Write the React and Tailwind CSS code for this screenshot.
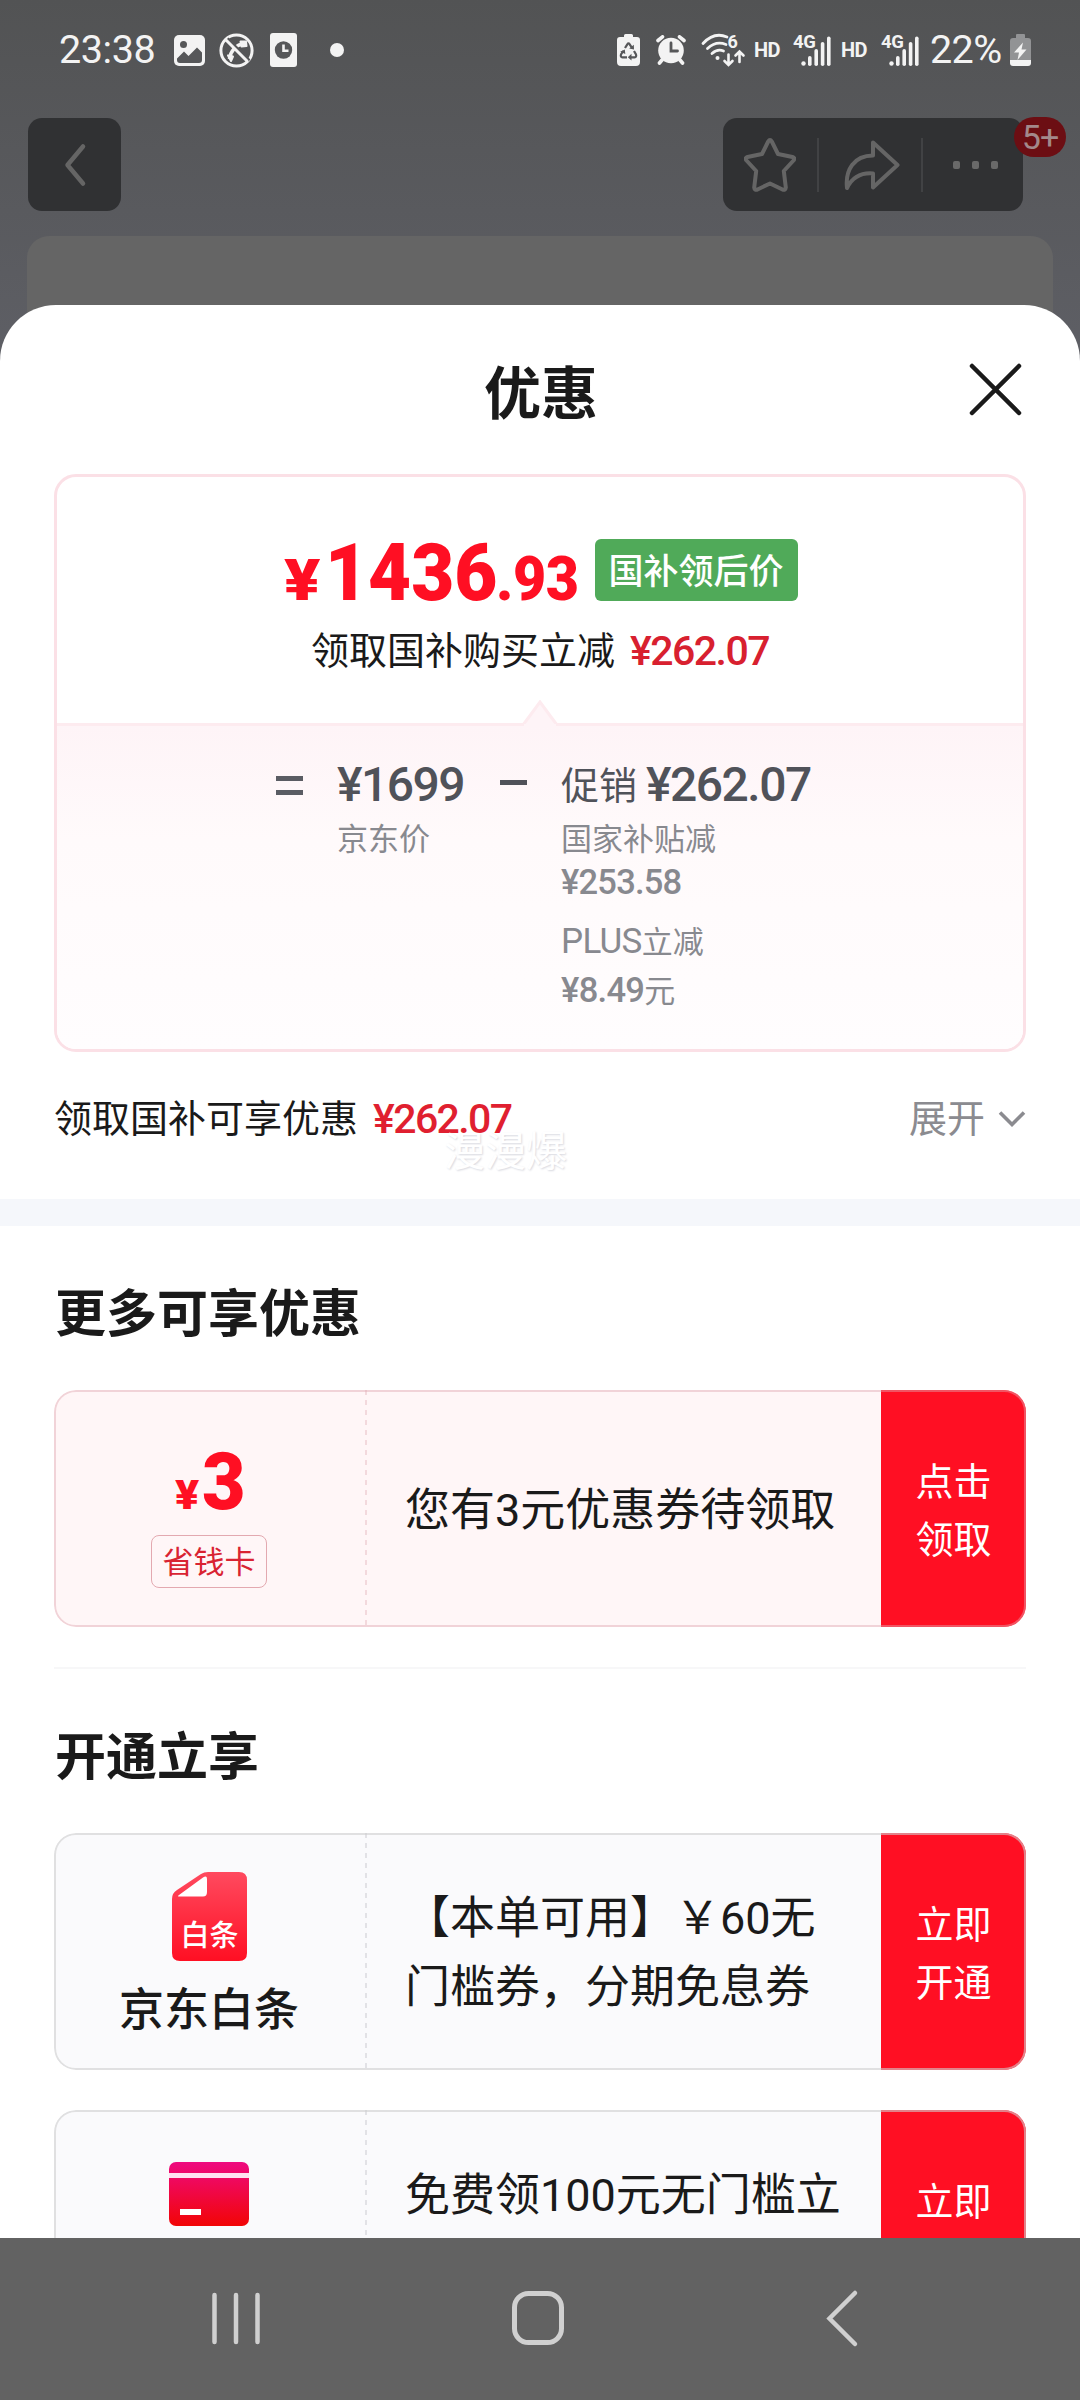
import React from 'react';

const ImageIcon = () => (
    <svg className="w-[31px] h-[31px]" viewBox="0 0 31 31">
        <rect width="31" height="31" rx="5" fill="#f3f3f3" />
        <circle cx="9.5" cy="9.5" r="3.5" fill="#565759" />
        <path d="M3 23.5 L10 16.5 L14.5 21 L23 12.5 L28 17.5 V25 Q28 28 25 28 H6 Q3 28 3 25 Z" fill="#565759" />
    </svg>
);

const NoCallIcon = () => (
    <svg className="w-[35px] h-[35px]" viewBox="0 0 35 35" fill="none" stroke="#f3f3f3">
        <circle cx="17.5" cy="17.5" r="15.6" strokeWidth="3" />
        <path d="M10.5 26 C11.5 18 17 11.5 25.5 10.5" strokeWidth="3.6" />
        <path d="M9 22.5 L14 23.5 L12 28 Z M21.5 8.5 L27 8.5 L27.5 13 L22.5 13.5 Z" fill="#f3f3f3" strokeWidth="2" strokeLinejoin="round" />
        <path d="M8.5 5.5 L30.5 27.5" stroke="#565759" strokeWidth="2.5" />
        <path d="M6.5 6.5 L28.5 28.5" strokeWidth="3" />
    </svg>
);

const ClockDocIcon = () => (
    <svg className="w-[27px] h-[34px]" viewBox="0 0 27 34">
        <rect width="27" height="34" rx="3" fill="#f3f3f3" />
        <circle cx="13.5" cy="17" r="8.7" fill="#565759" />
        <path d="M13.5 11.5 V17.8 H18.5" fill="none" stroke="#f3f3f3" strokeWidth="2.6" />
    </svg>
);

const RecycleBatteryIcon = () => (
    <svg className="w-[23px] h-[32px]" viewBox="0 0 23 32">
        <path d="M7 3 V1.5 Q7 0 8.5 0 H14.5 Q16 0 16 1.5 V3 H20 Q23 3 23 6 V28 Q23 32 19 32 H4 Q0 32 0 28 V6 Q0 3 3 3 Z" fill="#f3f3f3" />
        <g fill="none" stroke="#565759" strokeWidth="2.2">
            <path d="M8 14 L10.3 10.3 Q11.5 8.6 12.7 10.3 L15 14" />
            <path d="M17 17 L19 20.5 Q19.8 23 17.5 23.3 H13" />
            <path d="M10 23.3 H5.5 Q3.2 23 4 20.5 L6.2 17" />
        </g>
        <path d="M12.2 14.5 L17 15.5 L16.8 10.8 Z M14.5 19.8 L10.8 23.3 L14.5 26.5 Z M3.2 17.8 L7.8 15.4 L8.3 20 Z" fill="#565759" />
    </svg>
);

const AlarmIcon = () => (
    <svg className="w-[30px] h-[30px]" viewBox="0 0 30 30">
        <circle cx="15" cy="15.5" r="12.8" fill="#f3f3f3" />
        <path d="M2 5.5 L6.5 1.8 M28 5.5 L23.5 1.8 M6 25 L3.5 28 M24 25 L26.5 28" stroke="#f3f3f3" strokeWidth="3.6" strokeLinecap="round" />
        <path d="M15 8 V16 H21.5" fill="none" stroke="#565759" strokeWidth="2.8" strokeLinecap="round" />
    </svg>
);

const WifiIcon = () => (
    <svg className="w-[44px] h-[34px] overflow-visible" viewBox="0 0 44 34" fill="none" stroke="#f3f3f3" strokeWidth="2.8" strokeLinecap="round">
        <path d="M2 10.5 Q13 -1.5 26 4" />
        <path d="M6.5 15.5 Q15 7.5 25 11.5" />
        <path d="M11 20.5 Q16.5 15.5 22.5 18" />
        <circle cx="16.5" cy="25" r="2" fill="#f3f3f3" stroke="none" />
        <path d="M27.5 21.5 V31.5 M23.5 28 L27.5 32 L31.5 28" strokeWidth="2.6" />
        <path d="M38.5 29 V18.5 M34.5 22.5 L38.5 18.5 L42.5 22.5" strokeWidth="2.6" />
        <text x="26.5" y="14.5" fontFamily="Roboto" fontWeight="700" fontSize="18" fill="#f3f3f3" stroke="none">6</text>
    </svg>
);

const SignalIcon = () => (
    <svg className="w-[38px] h-[34px] overflow-visible" viewBox="0 0 38 34">
        <text x="0" y="14.5" fontFamily="Roboto" fontWeight="700" fontSize="18.5" letterSpacing="-0.3" fill="#f3f3f3">4G</text>
        <g fill="#f3f3f3">
            <circle cx="10.5" cy="30.5" r="2.2" />
            <rect x="15" y="23" width="3.6" height="10" rx="1.8" />
            <rect x="21.4" y="16" width="3.6" height="17" rx="1.8" />
            <rect x="27.8" y="9" width="3.6" height="24" rx="1.8" />
            <rect x="34" y="3.5" width="3.6" height="29.5" rx="1.8" />
        </g>
    </svg>
);

const BatteryIcon = () => (
    <svg className="w-[21px] h-[32px]" viewBox="0 0 21 32">
        <path d="M6 4 V1 Q6 0 7 0 H14 Q15 0 15 1 V4 H18 Q21 4 21 7 V26 H0 V7 Q0 4 3 4 Z" fill="#929395" />
        <path d="M0 26 H21 V29 Q21 32 18 32 H3 Q0 32 0 29 Z" fill="#f3f3f3" />
        <path d="M13 8.5 L4 18.5 H9 L7.5 26 L16.5 15.5 H11.5 Z" fill="#f3f3f3" />
    </svg>
);

const StatusBar = () => (
    <div className="h-[100px] flex items-center pl-[59px] pr-[49px] text-[#f3f3f3]">
        <span className="w-[115px] text-[39.5px] leading-[40px] tracking-[-0.4px]">23:38</span>
        <ImageIcon />
        <div className="ml-[14px]"><NoCallIcon /></div>
        <div className="ml-[16px]"><ClockDocIcon /></div>
        <div className="ml-[33px] w-[14px] h-[14px] rounded-full bg-[#f3f3f3]" />
        <div className="ml-auto flex items-center">
            <RecycleBatteryIcon />
            <div className="ml-[16px]"><AlarmIcon /></div>
            <div className="ml-[15px]"><WifiIcon /></div>
            <span className="ml-[9px] w-[39px] text-[20px] leading-[20px] font-bold tracking-[-0.5px]">HD</span>
            <SignalIcon />
            <span className="ml-[10px] w-[40px] text-[20px] leading-[20px] font-bold tracking-[-0.5px]">HD</span>
            <SignalIcon />
            <span className="ml-[11px] w-[80px] text-[39.5px] leading-[40px] tracking-[-0.6px]">22%</span>
            <BatteryIcon />
        </div>
    </div>
);

const TopBar = () => (
    <div className="h-[93px] mt-[18px] pl-[28px] pr-[57px] flex justify-between">
        <div className="w-[93px] rounded-[14px] bg-[#303133] flex items-center justify-center">
            <svg className="w-[24px] h-[44px]" viewBox="0 0 24 44" fill="none" stroke="#656565" strokeWidth="4.5" strokeLinecap="round" strokeLinejoin="round">
                <path d="M20 3.5 L4.5 22 L20 40.5" />
            </svg>
        </div>
        <div className="relative w-[300px] rounded-[14px] bg-[#303133] flex items-center">
            <div className="w-[94px] flex justify-center pr-[1px]">
                <svg className="w-[52px] h-[54px]" viewBox="0 0 52 54" fill="none" stroke="#656565" strokeWidth="4" strokeLinejoin="round">
                    <path d="M24.2 3.5 Q26 0.5 27.8 3.5 L34 16 L48.5 19 Q51.5 20 49.5 22.5 L39.8 33 L41.8 49.5 Q41.5 52.5 38.5 51.5 L26 45.5 L13.5 51.5 Q10.5 52.5 10.2 49.5 L12.2 33 L2.5 22.5 Q0.5 20 3.5 19 L18 16 Z" />
                </svg>
            </div>
            <div className="w-[2px] h-[54px] bg-[#414244]" />
            <div className="w-[102px] flex justify-center pl-[4px]">
                <svg className="w-[56px] h-[50px]" viewBox="0 0 56 50" fill="none" stroke="#656565" strokeWidth="4" strokeLinejoin="round">
                    <path d="M29 2.5 L53.5 25 L29 47.5 V33.5 C17 32.5 8.5 37 3 48 C1 30 10 15.5 29 15.5 Z" />
                </svg>
            </div>
            <div className="w-[2px] h-[54px] bg-[#414244]" />
            <div className="ml-[30px] flex gap-[12px]">
                <div className="w-[7px] h-[8px] rounded-[2px] bg-[#696969]" />
                <div className="w-[7px] h-[8px] rounded-[2px] bg-[#696969]" />
                <div className="w-[7px] h-[8px] rounded-[2px] bg-[#696969]" />
            </div>
            <div className="absolute -top-[1px] left-[291px] w-[52px] h-[40px] rounded-full bg-[#6c0e13] text-[#a3898b] text-[34px] leading-[40px] text-center tracking-[-1px]">5+</div>
        </div>
    </div>
);

const PriceCard = () => (
    <div className="shrink-0 mx-[54px] h-[578px] border-[3px] border-[#fbe0e6] rounded-[22px] overflow-hidden">
        <div className="h-[246px] pt-[62px]">
            <div className="flex h-[62px] justify-center items-start">
                <div className="flex items-baseline w-[312px] pl-[1px] text-[#ff0f23] font-black leading-[69px]">
                    <span className="w-[41px] text-[58px] origin-left scale-x-[1.16]">¥</span>
                    <span className="w-[171px] text-[80px] origin-left scale-x-[0.93]">1436</span>
                    <span className="text-[61px] origin-left scale-x-[0.94] tracking-[-0.5px]">.93</span>
                </div>
                <div className="w-[203px] h-[62px] rounded-[6px] bg-[#50aa59] text-white text-[35px] leading-[67px] font-medium text-center">国补领后价</div>
            </div>
            <div className="mt-[27px] flex justify-center items-center text-[38px] leading-[46px] text-[#1a1a1a]">
                领取国补购买立减
                <span className="ml-[15px] text-[41px] font-medium tracking-[-1.5px] text-[#d8202f]">¥262.07</span>
            </div>
        </div>
        <div className="relative h-[326px] border-t-[3px] border-[#fdebef] bg-linear-to-b from-[#fef4f7] via-[#fffafb] via-35% to-[#fffdfe] pl-[219px] pt-[31px] flex items-start text-[#505259]">
            <svg className="absolute -top-[26px] left-[465px] w-[36px] h-[28px]" viewBox="0 0 36 28">
                <path d="M1 25 L18 2 L35 25" fill="#fef4f7" stroke="#fdebef" strokeWidth="3" />
                <rect x="2" y="24" width="32" height="4" fill="#fef4f7" />
            </svg>
            <div className="w-[27px] mt-[19px] flex flex-col gap-[9px]">
                <div className="h-[5px] bg-[#5a5c63]" />
                <div className="h-[5px] bg-[#5a5c63]" />
            </div>
            <div className="ml-[34px] w-[163px]">
                <div className="text-[48px] leading-[56px] font-medium tracking-[-1.5px]">¥1699</div>
                <div className="text-[31px] leading-[50px] text-[#88898f] mt-[2px]">京东价</div>
            </div>
            <div className="mt-[23px] w-[27px] h-[5px] bg-[#505259]" />
            <div className="ml-[34px]">
                <div className="flex items-center h-[56px] text-[38px]">
                    <span className="pt-[3px]">促销</span>
                    <span className="ml-[9px] text-[48px] font-medium tracking-[-1.5px]">¥262.07</span>
                </div>
                <div className="text-[31px] leading-[44px] text-[#88898f] mt-[5px]">国家补贴减</div>
                <div className="text-[34.5px] leading-[40px] text-[#88898f] font-medium tracking-[-0.8px]">¥253.58</div>
                <div className="text-[31px] leading-[46px] text-[#88898f] mt-[17px]"><span className="text-[35px] tracking-[-0.7px]">PLUS</span>立减</div>
                <div className="text-[31px] leading-[46px] text-[#88898f] mt-[1px]"><span className="text-[34.5px] font-medium tracking-[-0.7px]">¥8.49</span>元</div>
            </div>
        </div>
    </div>
);

const SummaryRow = () => (
    <div className="relative shrink-0 h-[147px] pt-[44px] px-[54px]">
        <div className="flex items-center text-[38px] leading-[46px] text-[#1a1a1a]">
            领取国补可享优惠
            <span className="ml-[15px] text-[41px] font-medium tracking-[-1.6px] text-[#e01f30]">¥262.07</span>
            <span className="ml-auto text-[#8b8b90]">展开</span>
            <svg className="ml-[13px] w-[28px] h-[18px]" viewBox="0 0 28 18" fill="none" stroke="#8b8b90" strokeWidth="3.6">
                <path d="M2 2.5 L14 14.5 L26 2.5" />
            </svg>
        </div>
        <div className="absolute left-[444px] top-[76px] text-[41px] leading-[48px] text-white [text-shadow:1px_1px_2px_#d8d9e0]">漫漫爆</div>
    </div>
);

const Coupon = ({ pink, left, lines, action }) => (
    <div className={`relative mx-[54px] h-[237px] rounded-[22px] overflow-hidden flex shrink-0 ${pink ? 'bg-[#fff6f7]' : 'bg-[#fafafc]'}`}>
        <div className="w-[311px] pr-[1px] flex flex-col items-center">
            {left}
        </div>
        <div className={`w-[2px] ${pink ? 'bg-[repeating-linear-gradient(#f3d9dd_0_5px,transparent_5px_10px)]' : 'bg-[repeating-linear-gradient(#e2e2e6_0_5px,transparent_5px_10px)]'}`} />
        <div className="flex-1 pt-[3px] pl-[38px] flex flex-col justify-center text-[45px] leading-[69px] text-[#1a1a1a] whitespace-nowrap">
            {lines.map((line) => <div key={line}>{line}</div>)}
        </div>
        <div className="w-[145px] pt-[5px] bg-[#ff0f23] text-white text-[38px] leading-[58px] flex flex-col items-center justify-center">
            {action.map((word) => <div key={word}>{word}</div>)}
        </div>
        <div className={`absolute inset-0 rounded-[22px] border-[2px] ${pink ? 'border-[#dfa9b1]/45' : 'border-[#cfcfcf]/60'}`} />
    </div>
);

const SavingCard = () => (
    <>
        <div className="mt-[57px] h-[70px] flex items-baseline leading-[70px] font-black text-[#ff0f23]">
            <span className="w-[27px] text-[40px] origin-left scale-x-[1.12]">¥</span>
            <span className="w-[42px] text-[80px] origin-left scale-x-[0.94]">3</span>
        </div>
        <div className="mt-[18px] w-[116px] h-[53px] border-[1px] border-[#e3a9b0] rounded-[8px] text-[31px] leading-[54px] text-center text-[#d92332]">省钱卡</div>
    </>
);

const BaitiaoLogo = () => (
    <>
        <svg className="mt-[38px] w-[75px] h-[92px]" viewBox="0 0 75 92">
            <defs>
                <linearGradient id="baitiao" x1="0" y1="0" x2="0" y2="1">
                    <stop offset="0" stopColor="#ff4a5f" />
                    <stop offset="1" stopColor="#ff0f23" />
                </linearGradient>
            </defs>
            <path d="M36 1 H67 Q75 1 75 9 V82 Q75 90 67 90 H8 Q0 90 0 82 V28 Q0 22 5 19 L29 3 Q32 1 36 1 Z" fill="url(#baitiao)" />
            <path d="M7 24 L31 6.5 Q35 4 35 8 V21 Q35 25.5 31 25.5 H8 Q4.5 25.5 7 24 Z" fill="#fff" />
            <text x="8.5" y="75" fontFamily="Noto Sans CJK SC" fontWeight="500" fontSize="29" fill="#fff">白条</text>
        </svg>
        <div className="mt-[15px] text-[45px] leading-[66px] font-medium text-[#1a1a1a]">京东白条</div>
    </>
);

const CardLogo = () => (
    <svg className="mt-[52px] w-[80px] h-[64px]" viewBox="0 0 80 64">
        <defs>
            <linearGradient id="bankcard" x1="0" y1="0" x2="0" y2="1">
                <stop offset="0" stopColor="#ee0a80" />
                <stop offset="1" stopColor="#f20505" />
            </linearGradient>
        </defs>
        <rect width="80" height="64" rx="7" fill="url(#bankcard)" />
        <rect y="11" width="80" height="5" fill="#ffe3f2" />
        <rect x="11" y="47" width="21" height="6" fill="#fff" />
    </svg>
);

const NavBar = () => (
    <div className="absolute inset-x-0 bottom-0 h-[162px] bg-[#626262]">
        <svg className="w-full h-full" viewBox="0 0 1080 162" fill="none" stroke="#d0d0d0">
            <path d="M214.5 57 V104 M236 57 V104 M257.5 57 V104" strokeWidth="4.5" strokeLinecap="round" />
            <rect x="514.5" y="55.5" width="47" height="49" rx="14" strokeWidth="5" />
            <path d="M855 55 L829.5 80.5 L855 106" strokeWidth="4.5" strokeLinecap="round" />
        </svg>
    </div>
);

const App = () => (
    <div className="relative w-[1080px] h-[2400px] overflow-hidden bg-white font-['Roboto','Noto_Sans_CJK_SC',sans-serif]">
        <div className="h-[420px] bg-linear-to-b from-[#525354] to-[#606168]">
            <StatusBar />
            <TopBar />
            <div className="mt-[25px] mx-[27px] h-[184px] rounded-t-[22px] bg-[#656565]" />
        </div>

        <div className="relative -mt-[115px] h-[1933px] overflow-hidden rounded-t-[56px] bg-white flex flex-col">
            <div className="relative h-[169px] shrink-0 pt-[57px] pl-[2px] text-center text-[57px] leading-[66px] font-bold text-[#1a1a1a]">
                优惠
                <svg className="absolute left-[968px] top-[57px] w-[55px] h-[55px]" viewBox="0 0 55 55" stroke="#1a1a1a" strokeWidth="4.5" strokeLinecap="round">
                    <path d="M4 4 L51 51 M51 4 L4 51" />
                </svg>
            </div>

            <PriceCard />
            <SummaryRow />
            <div className="h-[27px] shrink-0 bg-[#f5f7fb]" />

            <h2 className="shrink-0 h-[164px] pt-[51px] pl-[55px] text-[51px] leading-[76px] font-bold text-[#1a1a1a]">更多可享优惠</h2>
            <Coupon pink left={<SavingCard />} lines={['您有3元优惠券待领取']} action={['点击', '领取']} />

            <div className="shrink-0 mt-[40px] mx-[54px] h-[2px] bg-[#f7f7f8]" />

            <h2 className="shrink-0 h-[164px] pt-[51px] pl-[55px] text-[51px] leading-[76px] font-bold text-[#1a1a1a]">开通立享</h2>
            <Coupon left={<BaitiaoLogo />} lines={['【本单可用】￥60无', '门槛券，分期免息券']} action={['立即', '开通']} />
            <div className="h-[40px] shrink-0" />
            <Coupon left={<CardLogo />} lines={['免费领100元无门槛立', '\u00a0']} action={['立即', '\u00a0']} />
        </div>

        <NavBar />
    </div>
);

export default App;
